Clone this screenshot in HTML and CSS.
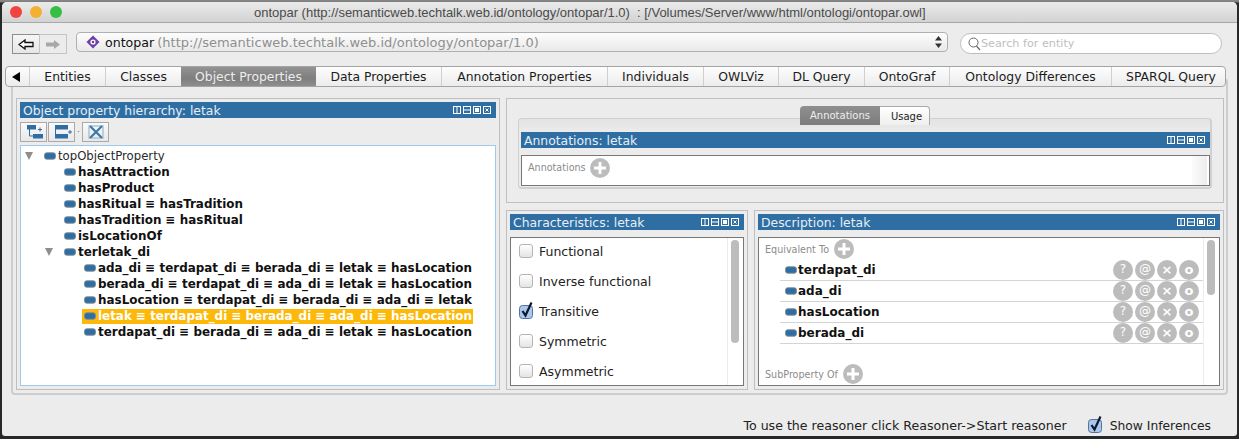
FILE: index.html
```html
<!DOCTYPE html>
<html lang="en">
<head>
<meta charset="utf-8">
<title>ontopar</title>
<link rel="stylesheet" href="styles.css">
</head>
<body>
<svg class="defs" width="0" height="0" aria-hidden="true">
  <symbol id="prop" viewBox="0 0 13 8"><rect x=".5" y=".5" width="12" height="7" rx="2.5" fill="#2f6ea3" stroke="#7d8c98"/></symbol>
  <symbol id="plus" viewBox="0 0 20 20"><circle cx="10" cy="10" r="10" fill="#bcbcbc"/><path d="M10 4v12M4 10h12" stroke="#fff" stroke-width="3"/></symbol>
  <symbol id="view" viewBox="0 0 38 8"><g fill="none" stroke="#fff"><rect x=".5" y=".5" width="7" height="7"/><path d="M4 0v8"/><rect x="10.5" y=".5" width="7" height="7"/><path d="M10 4h8"/><rect x="20.5" y=".5" width="7" height="7"/><rect x="22.5" y="2.5" width="3" height="3" fill="#fff"/><rect x="30.5" y=".5" width="7" height="7"/><path d="M32.5 2.5l3 3M35.5 2.5l-3 3"/></g></symbol>
  <symbol id="check" viewBox="0 0 18 18"><rect x="1.500" y="4.500" width="13" height="13" rx="3" fill="#a9c8ee" stroke="#5b6f9c"/><path d="M4.500 10l3 4.500L13.500 1.500" fill="none" stroke="#10182c" stroke-width="2.200"/></symbol>
</svg>
<main class="window">
  <header class="titlebar">
    <div class="lights"><i class="light red"></i><i class="light amber"></i><i class="light green"></i></div>
    <div class="title-text">ontopar (http://semanticweb.techtalk.web.id/ontology/ontopar/1.0)&nbsp; : [/Volumes/Server/www/html/ontologi/ontopar.owl]</div>
  </header>

  <nav class="navbar">
    <div class="history">
      <button class="hist active"><svg width="16" height="11" viewBox="0 0 16 11"><path d="M1 5.500L7 1v2.500h8v4H7V10z" fill="#fff" stroke="#111" stroke-width="1.300"/></svg></button>
      <button class="hist"><svg width="16" height="11" viewBox="0 0 16 11"><path d="M15 5.500L9 1v2.500H1v4h8V10z" fill="#a8a8a8"/></svg></button>
    </div>
    <div class="combo">
      <svg width="14" height="14" viewBox="0 0 14 14"><path d="M7 .5L13.500 7 7 13.500.5 7z" fill="#6d3fa8"/><circle cx="7" cy="7" r="2.600" fill="#fff"/><circle cx="7" cy="7" r="1.300" fill="#6d3fa8"/></svg>
      <span class="combo-name">ontopar</span>
      <span class="combo-uri">(http://semanticweb.techtalk.web.id/ontology/ontopar/1.0)</span>
      <svg class="combo-arrows" width="7" height="12" viewBox="0 0 7 12"><path d="M3.500 0L7 4.500H0zM3.500 12L0 7.500h7z" fill="#333"/></svg>
    </div>
    <div class="search">
      <svg width="13" height="14" viewBox="0 0 13 14"><circle cx="5.500" cy="5.500" r="4.500" fill="none" stroke="#666"/><path d="M8.500 9l3.500 4" stroke="#666" stroke-width="1.200"/></svg>
      <span>Search for entity</span>
    </div>
  </nav>

  <div class="tabs">
    <div class="tab tab-arrow"><svg width="8" height="10" viewBox="0 0 8 10"><path d="M8 0v10L0 5z" fill="#000"/></svg></div>
    <div class="tab">Entities</div>
    <div class="tab">Classes</div>
    <div class="tab selected">Object Properties</div>
    <div class="tab">Data Properties</div>
    <div class="tab">Annotation Properties</div>
    <div class="tab">Individuals</div>
    <div class="tab">OWLViz</div>
    <div class="tab">DL Query</div>
    <div class="tab">OntoGraf</div>
    <div class="tab">Ontology Differences</div>
    <div class="tab">SPARQL Query</div>
  </div>

  <div class="pane">
    <section class="holder hierarchy">
      <div class="viewbar"><span>Object property hierarchy: letak</span><svg width="38" height="8"><use href="#view"/></svg></div>
      <div class="tools">
        <button class="tool"><svg width="20" height="14" viewBox="0 0 20 14"><path d="M3 0h9v4.500H3zM9 9h10v4.500H9z" fill="#2f6ea3"/><path d="M5.500 4v7H9" fill="none" stroke="#2f6ea3"/><path d="M14 4.500h4M16 2.500v4" stroke="#2f6ea3"/></svg></button>
        <button class="tool"><svg width="20" height="14" viewBox="0 0 20 14"><path d="M3 0h13v4.500H3zM3 9h13v4.500H3z" fill="#2f6ea3"/><path d="M3.500 4v6" stroke="#2f6ea3"/><path d="M16 7h4M18 5v4" stroke="#2f6ea3"/></svg></button>
        <span class="tool-dot">·</span>
        <button class="tool"><svg width="16" height="14" viewBox="0 0 16 14"><path d="M1 1h14v12H1z" fill="none" stroke="#a9c4d9" stroke-width="1.500"/><path d="M2 1l12 12M14 1L2 13" stroke="#3b78a9" stroke-width="2.200"/></svg></button>
      </div>
      <ul class="tree">
        <li class="node lvl0 regular"><i class="tri"></i><svg class="pi" width="13" height="8"><use href="#prop"/></svg>topObjectProperty</li>
        <li class="node lvl1"><svg class="pi" width="13" height="8"><use href="#prop"/></svg>hasAttraction</li>
        <li class="node lvl1"><svg class="pi" width="13" height="8"><use href="#prop"/></svg>hasProduct</li>
        <li class="node lvl1"><svg class="pi" width="13" height="8"><use href="#prop"/></svg>hasRitual ≡ hasTradition</li>
        <li class="node lvl1"><svg class="pi" width="13" height="8"><use href="#prop"/></svg>hasTradition ≡ hasRitual</li>
        <li class="node lvl1"><svg class="pi" width="13" height="8"><use href="#prop"/></svg>isLocationOf</li>
        <li class="node lvl1 open"><i class="tri"></i><svg class="pi" width="13" height="8"><use href="#prop"/></svg>terletak_di</li>
        <li class="node lvl2"><svg class="pi" width="13" height="8"><use href="#prop"/></svg>ada_di ≡ terdapat_di ≡ berada_di ≡ letak ≡ hasLocation</li>
        <li class="node lvl2"><svg class="pi" width="13" height="8"><use href="#prop"/></svg>berada_di ≡ terdapat_di ≡ ada_di ≡ letak ≡ hasLocation</li>
        <li class="node lvl2"><svg class="pi" width="13" height="8"><use href="#prop"/></svg>hasLocation ≡ terdapat_di ≡ berada_di ≡ ada_di ≡ letak</li>
        <li class="node lvl2 current"><svg class="pi" width="13" height="8"><use href="#prop"/></svg><span class="hl">letak ≡ terdapat_di ≡ berada_di ≡ ada_di ≡ hasLocation</span></li>
        <li class="node lvl2"><svg class="pi" width="13" height="8"><use href="#prop"/></svg>terdapat_di ≡ berada_di ≡ ada_di ≡ letak ≡ hasLocation</li>
      </ul>
    </section>

    <div class="right">
      <section class="holder annot-holder">
        <div class="subtabs">
          <div class="subtab on">Annotations</div>
          <div class="subtab">Usage</div>
        </div>
        <div class="subpane">
          <div class="viewbar"><span>Annotations: letak</span><svg width="38" height="8"><use href="#view"/></svg></div>
          <div class="annot-box">
            <span class="frame-label">Annotations</span><svg class="plus" width="20" height="20"><use href="#plus"/></svg>
            <div class="gutter"></div>
          </div>
        </div>
      </section>

      <div class="lower">
        <section class="holder chars">
          <div class="viewbar"><span>Characteristics: letak</span><svg width="38" height="8"><use href="#view"/></svg></div>
          <div class="chars-box">
            <ul class="checks">
              <li class="check"><i class="cb"></i>Functional</li>
              <li class="check"><i class="cb"></i>Inverse functional</li>
              <li class="check"><svg class="cb-on" width="18" height="18"><use href="#check"/></svg>Transitive</li>
              <li class="check"><i class="cb"></i>Symmetric</li>
              <li class="check"><i class="cb"></i>Asymmetric</li>
            </ul>
            <div class="scroll"><div class="thumb thumb-chars"></div></div>
          </div>
        </section>

        <section class="holder desc">
          <div class="viewbar"><span>Description: letak</span><svg width="38" height="8"><use href="#view"/></svg></div>
          <div class="desc-box">
            <div class="frame">
              <div class="frame-head"><span class="frame-label">Equivalent To</span><svg class="plus" width="20" height="20"><use href="#plus"/></svg></div>
              <div class="row"><svg class="pi" width="13" height="8"><use href="#prop"/></svg><b>terdapat_di</b><span class="acts"><i class="act thin">?</i><i class="act thin">@</i><i class="act">×</i><i class="act">o</i></span></div>
              <div class="row"><svg class="pi" width="13" height="8"><use href="#prop"/></svg><b>ada_di</b><span class="acts"><i class="act thin">?</i><i class="act thin">@</i><i class="act">×</i><i class="act">o</i></span></div>
              <div class="row"><svg class="pi" width="13" height="8"><use href="#prop"/></svg><b>hasLocation</b><span class="acts"><i class="act thin">?</i><i class="act thin">@</i><i class="act">×</i><i class="act">o</i></span></div>
              <div class="row"><svg class="pi" width="13" height="8"><use href="#prop"/></svg><b>berada_di</b><span class="acts"><i class="act thin">?</i><i class="act thin">@</i><i class="act">×</i><i class="act">o</i></span></div>
              <div class="frame-head second"><span class="frame-label">SubProperty Of</span><svg class="plus" width="20" height="20"><use href="#plus"/></svg></div>
              <div class="row clip"><span class="acts"><i class="act"></i><i class="act"></i><i class="act"></i><i class="act"></i></span></div>
            </div>
            <div class="scroll"><div class="thumb thumb-desc"></div></div>
          </div>
        </section>
      </div>
    </div>
  </div>

  <footer class="status">
    <span class="hint">To use the reasoner click Reasoner-&gt;Start reasoner</span>
    <svg class="cb-on" width="18" height="18"><use href="#check"/></svg>
    <span class="show">Show Inferences</span>
  </footer>
</main>
</body>
</html>
```
FILE: styles.css
```css
* { box-sizing: border-box; }
html, body { margin: 0; padding: 0; }
body {
  width: 1239px;
  height: 439px;
  overflow: hidden;
  padding: 2px 2px 3px 2px;
  background: linear-gradient(#8a8a8a 0, #7a7a7a 2px, #26282a 3px);
  font-family: "DejaVu Sans", sans-serif;
  font-size: 12px;
  color: #1c1c1c;
}
.defs { position: absolute; }
ul { list-style: none; margin: 0; padding: 0; }
button { padding: 0; margin: 0; font: inherit; }
i { font-style: normal; }

.window {
  width: 1235px;
  height: 434px;
  display: flex;
  flex-direction: column;
  background: #ececec;
  border-radius: 5px 5px 3px 3px;
  overflow: hidden;
}

.titlebar {
  height: 21px;
  flex: none;
  display: flex;
  align-items: center;
  background: linear-gradient(#ebebeb, #d2d2d2);
  border-bottom: 1px solid #a8a8a8;
}
.lights { display: flex; gap: 8px; padding-left: 8px; width: 150px; flex: none; }
.light { width: 12px; height: 12px; border-radius: 50%; }
.red { background: #f2443f; }
.amber { background: #f5b031; }
.green { background: #33c042; }
.title-text { flex: 1; padding-left: 102px; font-family: "Liberation Sans", sans-serif; font-size: 13px; letter-spacing: -.01px; color: #4a4a4a; white-space: nowrap; }

.navbar {
  height: 43px;
  flex: none;
  display: flex;
  align-items: flex-start;
  padding: 9px 15px 0 10px;
}
.history { display: flex; margin-top: 2px; flex: none; }
.hist {
  width: 28px;
  height: 20px;
  display: flex;
  align-items: center;
  justify-content: center;
  background: #ececec;
  border: 1px solid #c4c4c4;
}
.hist.active { border-color: #8e8e8e; background: linear-gradient(#f6f6f6, #e6e6e6); width: 28px; }
.hist + .hist { margin-left: -1px; }
.combo {
  margin-left: 9px;
  width: 872px;
  height: 20px;
  display: flex;
  align-items: center;
  gap: 4px;
  padding: 0 5px 0 9px;
  background: linear-gradient(#fdfdfd, #e9e9e9);
  border: 1px solid #b0b0b0;
  border-radius: 4px;
  flex: none;
}
.combo-name { color: #111; margin: 0 -1px 0 1px; font-size: 12.6px; }
.combo-uri { color: #8f8f8f; flex: 1; font-size: 13px; }
.search {
  margin-left: 12px;
  width: 262px;
  height: 21px;
  margin-top: 1px;
  display: flex;
  align-items: center;
  gap: 0;
  padding-left: 7px;
  background: #fff;
  border: 1px solid #bdbdbd;
  border-radius: 11px;
  color: #c0c0c0;
  font-size: 11.2px;
  flex: none;
}

.tabs {
  position: relative;
  z-index: 1;
  flex: none;
  margin-left: 3px;
  width: 1221px;
  height: 21px;
  display: grid;
  grid-template-columns: 23px 76px 76px 135px 125px 166px 96px 75px 86px 85px 162px 114px;
  background: linear-gradient(#fdfdfd, #ececec);
  border: 1px solid #a4a4a4;
  border-radius: 4px;
  font-size: 12.4px;
}
.tab {
  display: flex;
  align-items: center;
  justify-content: center;
  color: #1c1c1c;
  border-left: 1px solid #cfcfcf;
  white-space: nowrap;
}
.tab:last-child { padding-left: 5px; }
.tab-arrow { border-left: none; justify-content: flex-start; padding-left: 6px; }
.tab.selected { background: linear-gradient(#939393, #7e7e7e 60%, #8e8e8e); color: #ededed; border-left: none; }
.tab.selected + .tab { border-left: none; }

.pane {
  flex: none;
  margin: -9px 0 0 9px;
  width: 1217px;
  height: 317px;
  padding: 18px 2px 3px 3px;
  display: flex;
  gap: 6px;
  border: 2px solid #cdcdcd;
  border-radius: 4px;
  background: #ececec;
}

.holder { border: 1px solid #bfbfbf; display: flex; flex-direction: column; padding: 3px; }
.hierarchy { width: 484px; flex: none; }
.right { flex: 1; min-width: 0; display: flex; flex-direction: column; gap: 7px; }

.viewbar {
  height: 16px;
  flex: none;
  display: flex;
  align-items: center;
  justify-content: space-between;
  padding: 0 5px 0 3px;
  background: #2f6ea3;
  color: #e6eef5;
  font-size: 12.4px;
  white-space: nowrap;
}

.tools { display: flex; align-items: center; height: 20px; margin-top: 4px; flex: none; }
.tool {
  width: 27px;
  height: 20px;
  display: flex;
  align-items: center;
  justify-content: center;
  background: linear-gradient(#fafafa, #e8e8e8);
  border: 1px solid #a9a9a9;
}
.tool + .tool { margin-left: 1px; }
.tool-dot { width: 7px; text-align: center; color: #666; font-size: 9px; }

.tree {
  flex: 1;
  margin-top: 3px;
  background: #fff;
  border: 1px solid #9fc9ec;
  padding-top: 2px;
  font-weight: bold;
  font-size: 11.93px;
  color: #111;
}
.node { height: 16px; display: flex; align-items: center; position: relative; white-space: nowrap; }
.pi { flex: none; margin-right: 2px; width: 12px; height: 8px; }
.lvl0 { padding-left: 23px; }
.lvl1 { padding-left: 43px; }
.lvl2 { padding-left: 63px; }
.regular { font-weight: normal; font-size: 11.7px; color: #2a2a2a; }
.tri {
  position: absolute;
  top: 4px;
  width: 0;
  height: 0;
  border: 4.5px solid transparent;
  border-top: 8px solid #8e8e8e;
  border-bottom: 0;
}
.lvl0 .tri { left: 4px; }
.lvl1 .tri { left: 24px; }
.current .pi { position: relative; z-index: 1; }
.hl { background: #fdb909; color: #fff; margin-left: -16px; padding: 0 1px 0 16px; height: 15px; line-height: 15px; }

.annot-holder { height: 105px; flex: none; padding: 7px 11px 0 11px; }
.subtabs { display: flex; justify-content: center; height: 19px; position: relative; z-index: 1; flex: none; }
.subtab {
  height: 19px;
  width: 50px;
  display: flex;
  align-items: center;
  justify-content: center;
  padding-left: 4px;
  font-size: 10px;
  background: linear-gradient(#fff, #eee);
  border: 1px solid #a9a9a9;
  border-bottom: none;
  border-left: none;
  border-radius: 0 4px 0 0;
}
.subtab.on {
  width: 80px;
  padding-left: 0;
  color: #eee;
  background: linear-gradient(#8f8f8f, #7c7c7c);
  border: none;
  border-radius: 4px 0 0 0;
}
.subpane {
  margin-top: -7px;
  height: 71px;
  flex: none;
  padding: 13px 0 0 2px;
  background: linear-gradient(#e3e3e3, #ececec 14px);
  border: 1px solid #d0d0d0;
  border-width: 1px 2px 2px 1px;
  border-radius: 4px;
}
.annot-box {
  margin-top: 7px;
  height: 31px;
  display: flex;
  align-items: center;
  gap: 4px;
  padding: 0 0 6px 6px;
  background: #fff;
  border: 1px solid #777;
  position: relative;
}
.frame-label { color: #8b8b8b; font-size: 9.6px; }
.plus { flex: none; }
.gutter { margin-left: auto; width: 15px; height: 29px; margin-bottom: -6px; margin-right: 2px; background: linear-gradient(90deg, #fbfbfb, #ededed); }

.lower { flex: 1; display: flex; gap: 6px; min-height: 0; }
.chars { width: 242px; flex: none; }
.desc { flex: 1; min-width: 0; }
.chars-box, .desc-box {
  margin-top: 7px;
  flex: 1;
  min-height: 0;
  overflow: hidden;
  display: flex;
  background: #fff;
  border: 1px solid #777;
}
.checks { flex: 1; padding-left: 8px; margin-top: -2px; }
.check { height: 30px; display: flex; align-items: center; gap: 6px; color: #222; font-size: 12.5px; }
.cb { width: 14px; height: 14px; flex: none; border: 1px solid #b4b4b4; border-radius: 3px; background: linear-gradient(#fff, #e4e4e4); }
.cb-on { flex: none; margin: -3px -3px 0 -1px; }
.scroll { width: 16px; flex: none; padding: 2px 3px; background: #fff; border-left: 1px solid #ececec; }
.thumb { background: #bcbcbc; border-radius: 4px; width: 8px; }
.thumb-chars { height: 103px; }
.thumb-desc { height: 55px; }

.frame { flex: 1; min-width: 0; padding-left: 6px; }
.frame-head { height: 22px; display: flex; align-items: center; gap: 5px; }
.frame-head.second { margin-top: 19px; }
.row {
  margin-left: 15px;
  height: 21px;
  flex: none;
  display: flex;
  align-items: center;
  padding-left: 5px;
  border-bottom: 1px solid #d4d4d4;
  font-size: 12px;
  color: #111;
}
.row .pi { margin-right: 1px; }
.row b { font-weight: bold; }
.acts { margin-left: auto; display: flex; gap: 2px; margin-right: 4px; }
.act {
  width: 20px;
  height: 20px;
  flex: none;
  border-radius: 50%;
  background: #bcbcbc;
  color: #fff;
  font-weight: bold;
  font-size: 13px;
  line-height: 19px;
  text-align: center;
}
.act.thin { font-weight: normal; font-size: 12px; }
.clip { border: none; margin-top: -1px; height: 21px; }

.status {
  flex: 1;
  display: flex;
  align-items: center;
  justify-content: flex-end;
  padding: 20px 26px 0 0;
  color: #222;
  white-space: nowrap;
}
.hint { font-size: 12.6px; }
.status .cb-on { margin-left: 20px; margin-right: -1px; }
.show { margin-left: 6px; font-size: 12.3px; }
```
